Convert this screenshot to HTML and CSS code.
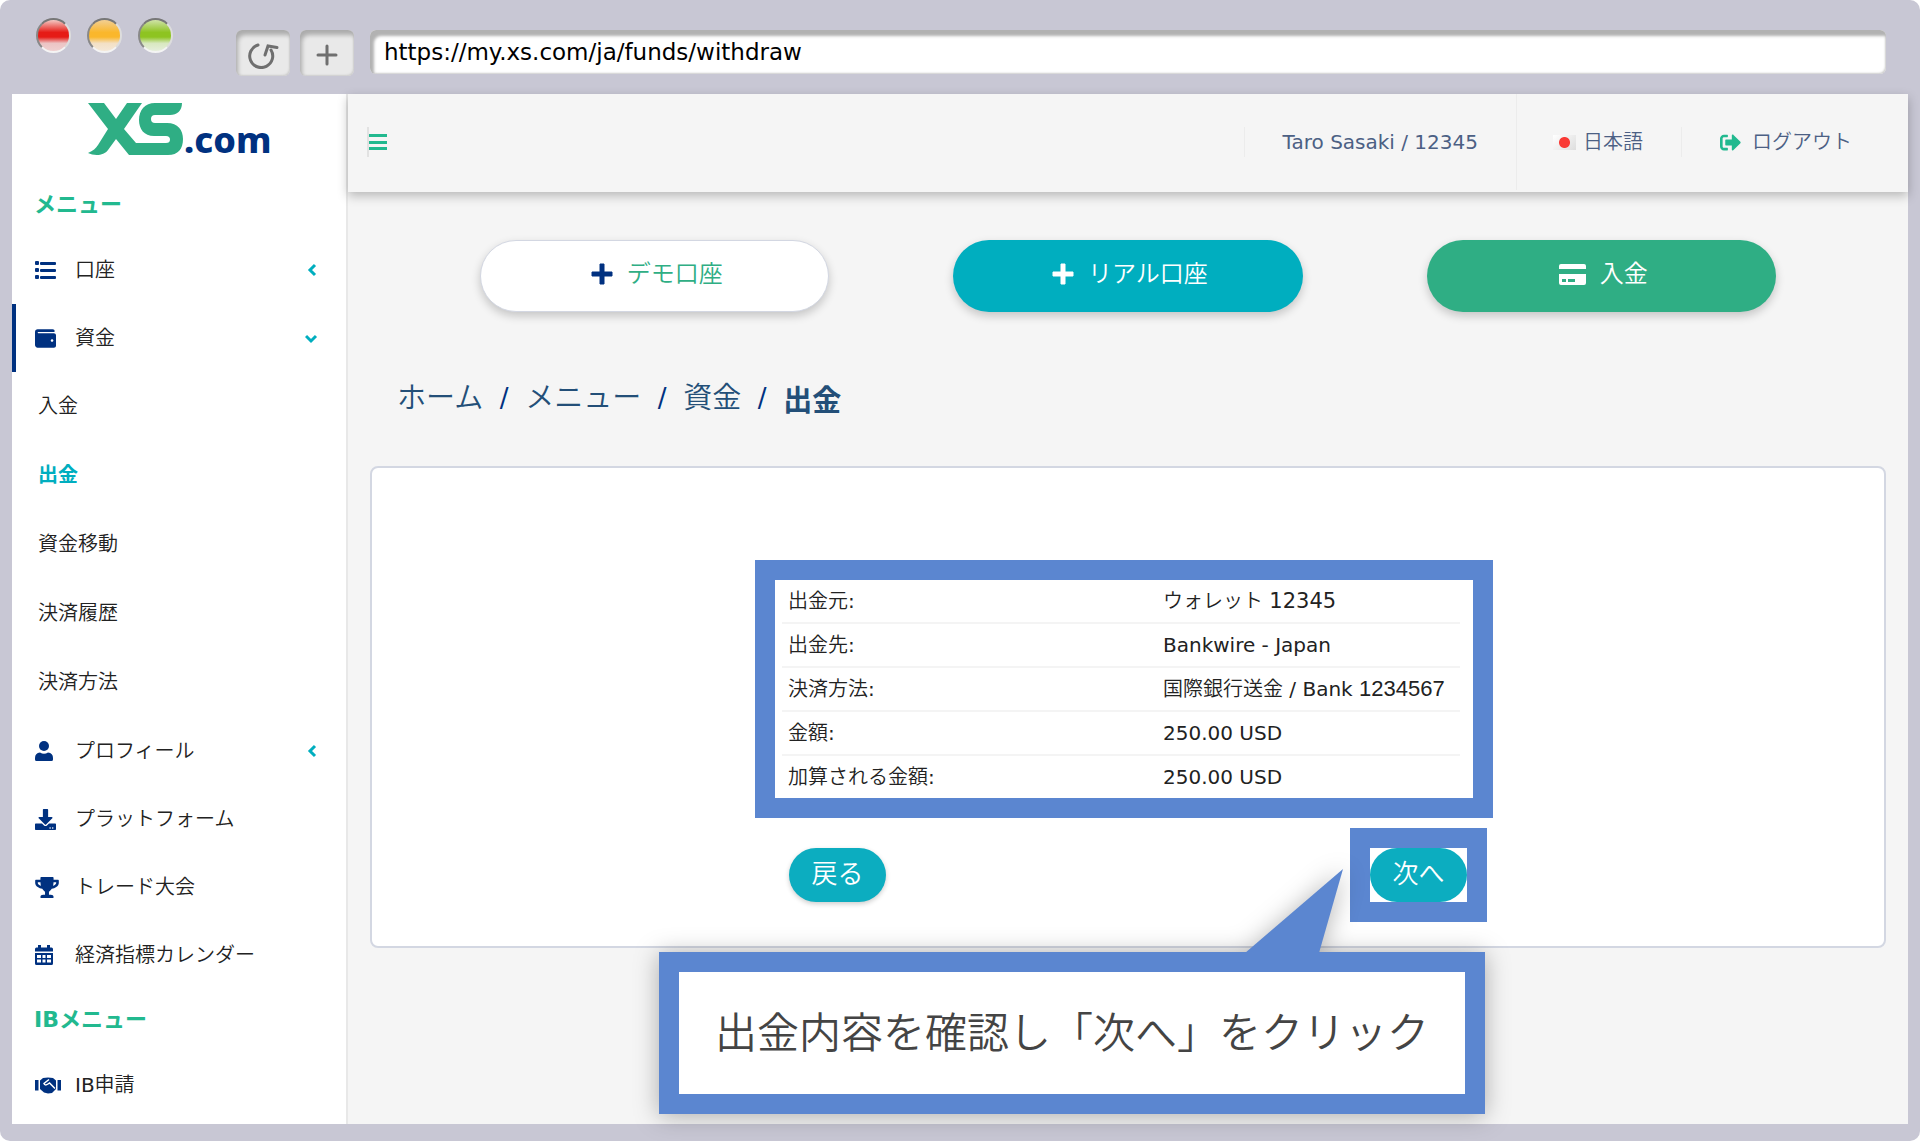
FILE: index.html
```html
<!DOCTYPE html>
<html lang="ja">
<head>
<meta charset="utf-8">
<meta name="viewport" content="width=device-width, initial-scale=1">
<title>出金 | XS.com</title>
<link rel="stylesheet" href="styles.css">
</head>
<body>
<div class="browser">
  <div class="chrome">
    <div class="lights"><span class="light light-red"></span><span class="light light-amber"></span><span class="light light-green"></span></div>
    <button class="chrome-btn" type="button" aria-label="再読み込み">
      <svg width="34" height="28" viewBox="0 0 34 28" fill="none" stroke="#6f6f6f" stroke-width="3" stroke-linecap="round"><path d="M12 4A11.500 11.500 0 1 0 25 9"/><path d="M19 14 22 5 31 6.500"/></svg>
    </button>
    <button class="chrome-btn" type="button" aria-label="新しいタブ">
      <svg width="22" height="22" viewBox="0 0 22 22" fill="none" stroke="#6f6f6f" stroke-width="3" stroke-linecap="round"><path d="M11 2v18M2 11h18"/></svg>
    </button>
    <input class="address" type="text" aria-label="アドレス" value="https://my.xs.com/ja/funds/withdraw">
  </div>

  <div class="app">
    <aside class="sidebar">
      <a class="logo" href="#" aria-label="XS.com">
        <svg width="96" height="54" viewBox="0 0 96 54" fill="#2fae84"><path d="M0 1H16L28 17 39 1H54L36 27 48 41H78Q82 41 82 37.500 82 34 78 34H66C56 34 51 27 51 18 51 8 57 1 67 1H94C94 9 89 13 82 13H67Q63 13 63 17 63 21 67 21H79C90 21 95 28 95 37 95 47 90 53 80 53H41L28 37 20 48C16 54 6 54 0 51 5 49 8 46 10 43L20 27Z"/></svg><span class="logo-text">.com</span>
      </a>
      <nav class="menu">
        <h2 class="menu-title">メニュー</h2>
        <a class="item" href="#"><span class="ico"><svg width="21" height="18" viewBox="0 0 21 18"><rect width="4" height="4" rx="1"/><rect y="7" width="4" height="4" rx="1"/><rect y="14" width="4" height="4" rx="1"/><rect x="5" y="1" width="16" height="3" rx="1"/><rect x="5" y="8" width="16" height="3" rx="1"/><rect x="5" y="15" width="16" height="3" rx="1"/></svg></span>口座<svg class="caret" width="14" height="14" viewBox="0 0 14 14"><path d="M10 2 5 7l5 5"/></svg></a>
        <a class="item item-open" href="#"><span class="ico"><svg width="21" height="21" viewBox="0 0 512 512"><path d="M461.200 128H80c-8.840 0-16-7.160-16-16s7.160-16 16-16h384c8.840 0 16-7.160 16-16 0-26.510-21.490-48-48-48H64C28.650 32 0 60.650 0 96v320c0 35.350 28.650 64 64 64h397.200c28.020 0 50.800-21.530 50.800-48V176c0-26.470-22.780-48-50.800-48zM416 336c-17.670 0-32-14.330-32-32s14.330-32 32-32 32 14.330 32 32-14.330 32-32 32z"/></svg></span>資金<svg class="caret" width="14" height="14" viewBox="0 0 14 14"><path d="M1 5l5 5 5-5"/></svg></a>
        <a class="subitem" href="#">入金</a>
        <a class="subitem subitem-active" href="#">出金</a>
        <a class="subitem" href="#">資金移動</a>
        <a class="subitem" href="#">決済履歴</a>
        <a class="subitem" href="#">決済方法</a>
        <a class="item" href="#"><span class="ico"><svg width="18" height="20" viewBox="0 0 18 20"><circle cx="9" cy="5" r="5"/><path d="M5 11.500Q9 14 13 11.500 18 12 18 17V18.500Q18 20 16.500 20H1.500Q0 20 0 18.500V17Q0 12 5 11.500Z"/></svg></span>プロフィール<svg class="caret" width="14" height="14" viewBox="0 0 14 14"><path d="M10 2 5 7l5 5"/></svg></a>
        <a class="item" href="#"><span class="ico"><svg width="21" height="21" viewBox="0 0 512 512"><path d="M216 0h80c13.300 0 24 10.700 24 24v168h87.700c17.800 0 26.700 21.500 14.100 34.100L269.700 378.300c-7.500 7.500-19.800 7.500-27.300 0L90.100 226.100c-12.600-12.600-3.700-34.100 14.100-34.100H192V24c0-13.300 10.700-24 24-24zm296 376v112c0 13.300-10.700 24-24 24H24c-13.300 0-24-10.700-24-24V376c0-13.300 10.700-24 24-24h146.700l49 49c20.100 20.100 52.500 20.100 72.600 0l49-49H488c13.300 0 24 10.700 24 24zm-124 88c0-11-9-20-20-20s-20 9-20 20 9 20 20 20 20-9 20-20zm64 0c0-11-9-20-20-20s-20 9-20 20 9 20 20 20 20-9 20-20z"/></svg></span>プラットフォーム</a>
        <a class="item" href="#"><span class="ico"><svg width="24" height="21" viewBox="0 0 576 512"><path d="M552 64H448V24c0-13.300-10.700-24-24-24H152c-13.300 0-24 10.700-24 24v40H24C10.700 64 0 74.700 0 88v56c0 35.700 22.500 72.400 61.900 100.700 31.500 22.700 69.800 37.100 110 41.700C203.300 338.500 240 360 240 360v72h-48c-35.300 0-64 20.700-64 56v12c0 6.600 5.400 12 12 12h296c6.600 0 12-5.400 12-12v-12c0-35.300-28.700-56-64-56h-48v-72s36.700-21.500 68.100-73.600c40.300-4.600 78.600-19 110-41.700 39.300-28.300 61.900-65 61.900-100.700V88c0-13.300-10.700-24-24-24zM99.300 192.800C74.900 175.200 64 155.600 64 144v-16h64.200c1 32.600 5.800 61.200 12.800 86.200-15.100-5.200-29.200-12.400-41.700-21.400zM512 144c0 16.100-17.700 36.100-35.300 48.800-12.500 9-26.700 16.200-41.800 21.400 7-25 11.800-53.600 12.800-86.200H512v16z"/></svg></span>トレード大会</a>
        <a class="item" href="#"><span class="ico"><svg width="18" height="20" viewBox="0 0 18 20"><path fill-rule="evenodd" d="M3 0h3v2.500h6V0h3v2.500h1.500Q18 2.500 18 4v2.500H0V4Q0 2.500 1.500 2.500H3ZM0 8h18v10.500Q18 20 16.500 20h-15Q0 20 0 18.500ZM2 10v3h4v-3ZM7.500 10v3h3v-3ZM12 10v3h4v-3ZM2 14.500v3h4v-3ZM7.500 14.500v3h3v-3ZM12 14.500v3h4v-3Z"/></svg></span>経済指標カレンダー</a>
        <h2 class="menu-title">IBメニュー</h2>
        <a class="item" href="#"><span class="ico"><svg width="26" height="17" viewBox="0 0 26 17"><path d="M0 3h3.500v10.500H0ZM22.500 3H26v10.500h-3.500Z"/><path d="M5 3.500 8 1 13 .5 18 1l3 2.500V12l-4 4-4 .5-4-1L5 12Z"/><path d="M14 2.500 9 6.500q1 2.500 4 .5l1.500-1 5.500 5.500" fill="none" stroke="#fff" stroke-width="1.500"/></svg></span>IB申請</a>
      </nav>
    </aside>

    <div class="content">
      <header class="topbar">
        <button class="burger" type="button" aria-label="メニューを開閉"><svg width="18" height="17" viewBox="0 0 18 17" fill="#22b98f"><rect width="18" height="3"/><rect y="7" width="18" height="3"/><rect y="13" width="18" height="3"/></svg></button>
        <a class="top-link top-user" href="#">Taro Sasaki / 12345</a>
        <a class="top-link top-lang" href="#"><span class="flag"></span>日本語</a>
        <a class="top-link top-logout" href="#"><svg width="21" height="21" viewBox="0 0 512 512" fill="#22b98f"><path d="M497 273L329 441c-15 15-41 4.500-41-17v-96H152c-13.300 0-24-10.700-24-24v-96c0-13.300 10.700-24 24-24h136V88c0-21.400 25.900-32 41-17l168 168c9.300 9.400 9.300 24.600 0 34zM192 436v-40c0-6.600-5.400-12-12-12H96c-17.700 0-32-14.300-32-32V160c0-17.700 14.300-32 32-32h84c6.600 0 12-5.400 12-12V76c0-6.600-5.400-12-12-12H96c-53 0-96 43-96 96v192c0 53 43 96 96 96h84c6.600 0 12-5.400 12-12z"/></svg>ログアウト</a>
      </header>

      <main class="main">
        <div class="quick">
          <button class="pill pill-demo" type="button"><svg width="22" height="22" viewBox="0 0 22 22" fill="#003180"><path d="M9 1h4v8h8v4h-8v8H9v-8H1V9h8Z" stroke="#003180" stroke-linejoin="round"/></svg>デモ口座</button>
          <button class="pill pill-real" type="button"><svg width="22" height="22" viewBox="0 0 22 22" fill="#fff"><path d="M9 1h4v8h8v4h-8v8H9v-8H1V9h8Z" stroke="#fff" stroke-linejoin="round"/></svg>リアル口座</button>
          <button class="pill pill-deposit" type="button"><svg width="27" height="21" viewBox="0 0 27 21" fill="#fff"><path fill-rule="evenodd" d="M2 0h23q2 0 2 2v3H0V2Q0 0 2 0ZM0 10h27v9q0 2-2 2H2q-2 0-2-2ZM3 15v3h4v-3ZM9 15v3h7v-3Z"/></svg>入金</button>
        </div>

        <nav class="crumbs" aria-label="パンくず">
          <a href="#">ホーム</a><span class="sep">/</span><a href="#">メニュー</a><span class="sep">/</span><a href="#">資金</a><span class="sep">/</span><strong>出金</strong>
        </nav>

        <section class="card">
          <div class="confirm">
            <div class="highlight">
              <table class="summary">
                <tr><th scope="row">出金元:</th><td>ウォレット <span class="acct">12345</span></td></tr>
                <tr><th scope="row">出金先:</th><td>Bankwire - Japan</td></tr>
                <tr><th scope="row">決済方法:</th><td>国際銀行送金 / Bank <span class="bank-no">1234567</span></td></tr>
                <tr><th scope="row">金額:</th><td>250.00 USD</td></tr>
                <tr><th scope="row">加算される金額:</th><td>250.00 USD</td></tr>
              </table>
            </div>
            <div class="actions">
              <button class="step" type="button">戻る</button>
              <div class="next-mark"><button class="step" type="button">次へ</button></div>
            </div>
            <div class="callout">
              <svg class="tail" width="98" height="84" viewBox="0 0 98 84" fill="#5b86d0"><path d="M0 84 98 0 74 84Z"/></svg>
              <p class="callout-text">出金内容を確認し「次へ」をクリック</p>
            </div>
          </div>
        </section>
      </main>
    </div>
  </div>
</div>
</body>
</html>
```
FILE: styles.css
```css
* { box-sizing: border-box; }

body {
  margin: 0;
  background: #fff;
  color: #222;
  font: 400 20px/30px "DejaVu Sans", "Noto Sans CJK JP DemiLight", "Noto Sans CJK JP", sans-serif;
}

a { color: inherit; text-decoration: none; }
button { font: inherit; cursor: pointer; }

/* Browser window */
.browser {
  display: flex;
  flex-direction: column;
  min-height: 100vh;
  padding: 0 12px 17px;
  border-radius: 10px;
  background: #c8c7d4;
  overflow: hidden;
}

.chrome {
  display: flex;
  align-items: flex-start;
  gap: 10px;
  height: 94px;
  padding: 30px 22px 0 24px;
}

.lights {
  display: flex;
  gap: 16px;
  margin: -12px 53px 0 0;
}

.light {
  width: 35px;
  height: 35px;
  border: 2px solid;
  border-color: #777 #ddd #f4f4f4 #888;
  border-radius: 50%;
}

.light-red { background: linear-gradient(#f3c9c4, #e61b16 40%, #e61b16 55%, #ecc4c4 75%, #efd0d0); }
.light-amber { background: linear-gradient(#f2cf94, #fab72c 40%, #fab72c 55%, #f3e0c4 75%, #f4e8d8); }
.light-green { background: linear-gradient(#cfe3a8, #8ec421 40%, #8ec421 55%, #d8e8c0 75%, #e6eedc); }

.chrome-btn {
  display: flex;
  align-items: center;
  justify-content: center;
  width: 54px;
  height: 46px;
  padding: 4px 0 0;
  border: 0;
  border-radius: 6px;
  background: #e9e9e9;
  box-shadow: inset 3px 6px 4px -1px #acacac, inset -1px -1px 2px #ccc;
}

.address {
  flex: 1;
  height: 44px;
  margin-left: 6px;
  padding: 0 14px;
  border: 0;
  border-radius: 6px;
  background: #fff;
  box-shadow: inset 5px 7px 3px -1px #b2b2b2, inset -1px -1px 2px #ccc;
  color: #000;
  font: 23px "DejaVu Sans", sans-serif;
}

/* Application shell */
.app {
  display: flex;
  flex: 1;
  background: #f5f5f5;
}

.sidebar {
  flex: none;
  width: 336px;
  border-right: 2px solid #e8e8e8;
  background: #fff;
}

.logo {
  display: flex;
  align-items: flex-end;
  height: 80px;
  padding: 0 0 18px 76px;
}

.logo-text {
  color: #003180;
  font: 800 36px/32px "Noto Sans", sans-serif;
}

.menu-title {
  margin: 0;
  padding-left: 22px;
  color: #22b98f;
  font-family: "DejaVu Sans", "Noto Sans CJK JP", sans-serif;
  font-size: 22px;
  font-weight: 700;
  line-height: 62px;
}

.item {
  display: flex;
  align-items: center;
  height: 68px;
  padding: 0 27px 0 19px;
  border-left: 4px solid transparent;
}

.item-open { border-left-color: #003180; }

.ico {
  display: flex;
  width: 40px;
  fill: #003180;
}

.caret {
  margin-left: auto;
  fill: none;
  stroke: #00aebf;
  stroke-width: 3;
}

.subitem {
  display: block;
  padding-left: 26px;
  line-height: 69px;
}

.subitem-active {
  color: #00aebf;
  font-family: "DejaVu Sans", "Noto Sans CJK JP", sans-serif;
  font-weight: 700;
}

.content {
  flex: 1;
  min-width: 0;
}

/* Header */
.topbar {
  display: flex;
  align-items: center;
  height: 98px;
  padding: 0 18px 2px 19px;
  background: #f5f5f5;
  box-shadow: 0 4px 10px rgba(0, 0, 0, .25);
  color: #4c6084;
}

.burger {
  display: flex;
  align-items: center;
  height: 30px;
  margin-right: auto;
  padding: 0;
  border: 0;
  border-left: 2px solid #e2e2e2;
  background: none;
}

.top-link {
  display: flex;
  align-items: center;
  padding: 0 38px;
  border-left: 1px solid #ececec;
}

.top-lang {
  gap: 7px;
  height: 100%;
  padding: 0 38px 0 36px;
}

.top-logout { gap: 11px; }

.flag {
  width: 23px;
  height: 15px;
  background: radial-gradient(circle, #f93a35 5px, transparent 6px), linear-gradient(135deg, #fff, #ddd);
}

/* Page body */
.main { padding: 48px 22px 22px; }

.quick {
  display: grid;
  grid-template-columns: repeat(3, 1fr);
  gap: 124px;
  padding: 0 110px;
}

.pill {
  display: flex;
  align-items: center;
  justify-content: center;
  gap: 14px;
  height: 72px;
  padding: 0 0 4px 4px;
  border: 0;
  border-radius: 36px;
  box-shadow: 0 4px 10px rgba(0, 0, 0, .2);
  color: #fff;
  font-size: 24px;
}

.pill-demo {
  border: 1px solid #d3d7e2;
  background: #fff;
  color: #2fae84;
}

.pill-real { background: #00aebf; }
.pill-deposit { background: #2fae84; }

.crumbs {
  display: flex;
  align-items: center;
  margin: 64px 0 46px;
  padding-left: 27px;
  color: #234f78;
  font-size: 29px;
  line-height: 44px;
}

.crumbs strong { font-family: "Noto Sans CJK JP", sans-serif; }

.crumbs .sep {
  width: 42px;
  color: #003180;
  font-size: 26px;
  text-align: center;
}

.card {
  display: flex;
  justify-content: center;
  padding: 92px 0 24px;
  border: 2px solid #d3d7e2;
  border-radius: 8px;
  background: #fff;
}

.confirm {
  position: relative;
  width: 746px;
}

.highlight {
  width: 738px;
  padding: 0 13px 0 7px;
  border: 20px solid #5b86d0;
}

.summary {
  width: 100%;
  border-collapse: collapse;
  table-layout: fixed;
}

.summary th,
.summary td {
  padding: 0;
  border-bottom: 2px solid #f4f4f4;
  font-weight: 400;
  line-height: 42px;
  text-align: left;
  white-space: nowrap;
}

.summary th {
  width: 381px;
  padding-left: 6px;
}

.summary tr:last-child > * { border-bottom: 0; }
.acct { font-size: 21px; }
.bank-no { font: 22px "Liberation Sans", sans-serif; }

.actions {
  display: flex;
  align-items: center;
  justify-content: space-between;
  margin-top: 10px;
  padding: 0 14px 0 34px;
}

.step {
  display: block;
  width: 97px;
  height: 54px;
  padding: 0 0 2px;
  border: 0;
  border-radius: 27px;
  background: #0cadc0;
  box-shadow: 0 2px 5px rgba(0, 0, 0, .2);
  color: #fff;
  font-size: 26px;
}

.next-mark {
  border: 20px solid #5b86d0;
  background: #fff;
}

.next-mark .step { box-shadow: none; }

/* Speech bubble laid over the card's lower edge */
.callout {
  position: absolute;
  top: calc(100% + 30px);
  right: 16px;
  width: 826px;
  border: 20px solid #5b86d0;
  background: #fff;
  filter: drop-shadow(0 2px 12px rgba(0, 0, 0, .3));
}

.callout-text {
  margin: 0;
  padding-top: 2px;
  color: #444;
  font-size: 42px;
  line-height: 120px;
  text-align: center;
  white-space: nowrap;
}

.tail {
  position: absolute;
  right: 122px;
  bottom: calc(100% + 19px);
}
```
